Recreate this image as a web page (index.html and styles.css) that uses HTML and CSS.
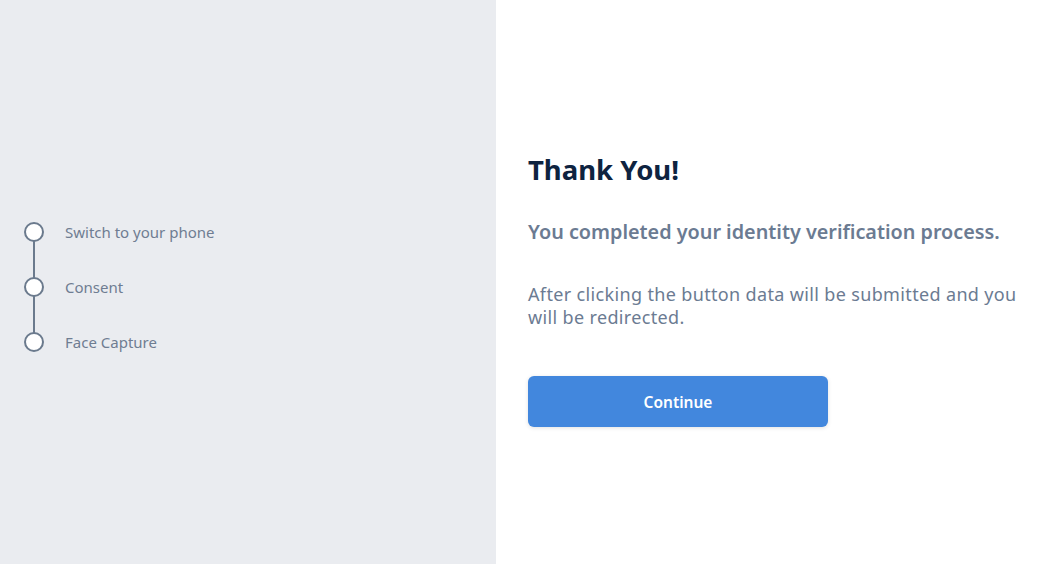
FILE: index.html
```html
<!DOCTYPE html>
<html lang="en">
<head>
<meta charset="utf-8">
<title>Thank You</title>
<link rel="stylesheet" href="styles.css">
</head>
<body>
<div class="layout">
  <aside class="sidebar">
    <ol class="steps">
      <li class="step"><span class="dot"></span><span class="label">Switch to your phone</span></li>
      <li class="step"><span class="dot"></span><span class="label">Consent</span></li>
      <li class="step"><span class="dot"></span><span class="label">Face Capture</span></li>
    </ol>
  </aside>
  <main class="content">
    <div class="panel">
      <h1 class="title">Thank You!</h1>
      <p class="subtitle">You completed your identity verification process.</p>
      <p class="text">After clicking the button data will be submitted and you will be redirected.</p>
      <button class="btn" type="button">Continue</button>
    </div>
  </main>
</div>
</body>
</html>
```

FILE: styles.css
```css
* { box-sizing: border-box; }
html, body { margin: 0; height: 100%; }
body {
  font-family: "Noto Sans", "Open Sans", sans-serif;
  background: #ffffff;
}
.layout {
  display: flex;
  height: 564px;
}
.sidebar {
  width: 496px;
  flex: none;
  background: #eaecf0;
  display: flex;
  align-items: center;
  padding-left: 24px;
  padding-top: 10px;
}
.steps {
  list-style: none;
  margin: 0;
  padding: 0;
  display: flex;
  flex-direction: column;
  gap: 35px;
}
.step {
  display: flex;
  align-items: center;
  position: relative;
  height: 20px;
}
.step + .step::before {
  content: "";
  position: absolute;
  left: 9px;
  top: -37px;
  width: 2px;
  height: 39px;
  background: #6b7a8d;
}
.dot {
  width: 20px;
  height: 20px;
  border-radius: 50%;
  border: 2px solid #6b7a8d;
  background: #ffffff;
  position: relative;
  z-index: 1;
  flex: none;
}
.label {
  margin-left: 21px;
  font-size: 15px;
  color: #6f7d92;
}
.content {
  flex: 1;
  padding-left: 32px;
  padding-top: 152px;
}
.panel {
  width: 500px;
}
.title {
  margin: 0;
  font-size: 27.5px;
  font-weight: 700;
  color: #0e2340;
  line-height: 36px;
}
.subtitle {
  margin: 30px 0 0;
  font-size: 19.8px;
  font-weight: 600;
  color: #6b7b92;
  line-height: 28px;
}
.text {
  margin: 36.5px 0 0;
  font-size: 18px;
  letter-spacing: 0.35px;
  color: #6b7b92;
  line-height: 23px;
  width: 500px;
}
.btn {
  margin-top: 47.5px;
  width: 300px;
  height: 51px;
  border: none;
  border-radius: 6px;
  background: #4287dd;
  color: #ffffff;
  font-family: inherit;
  font-size: 15.5px;
  font-weight: 600;
  box-shadow: 0 1px 4px rgba(0,0,0,0.12);
  display: block;
}
```
